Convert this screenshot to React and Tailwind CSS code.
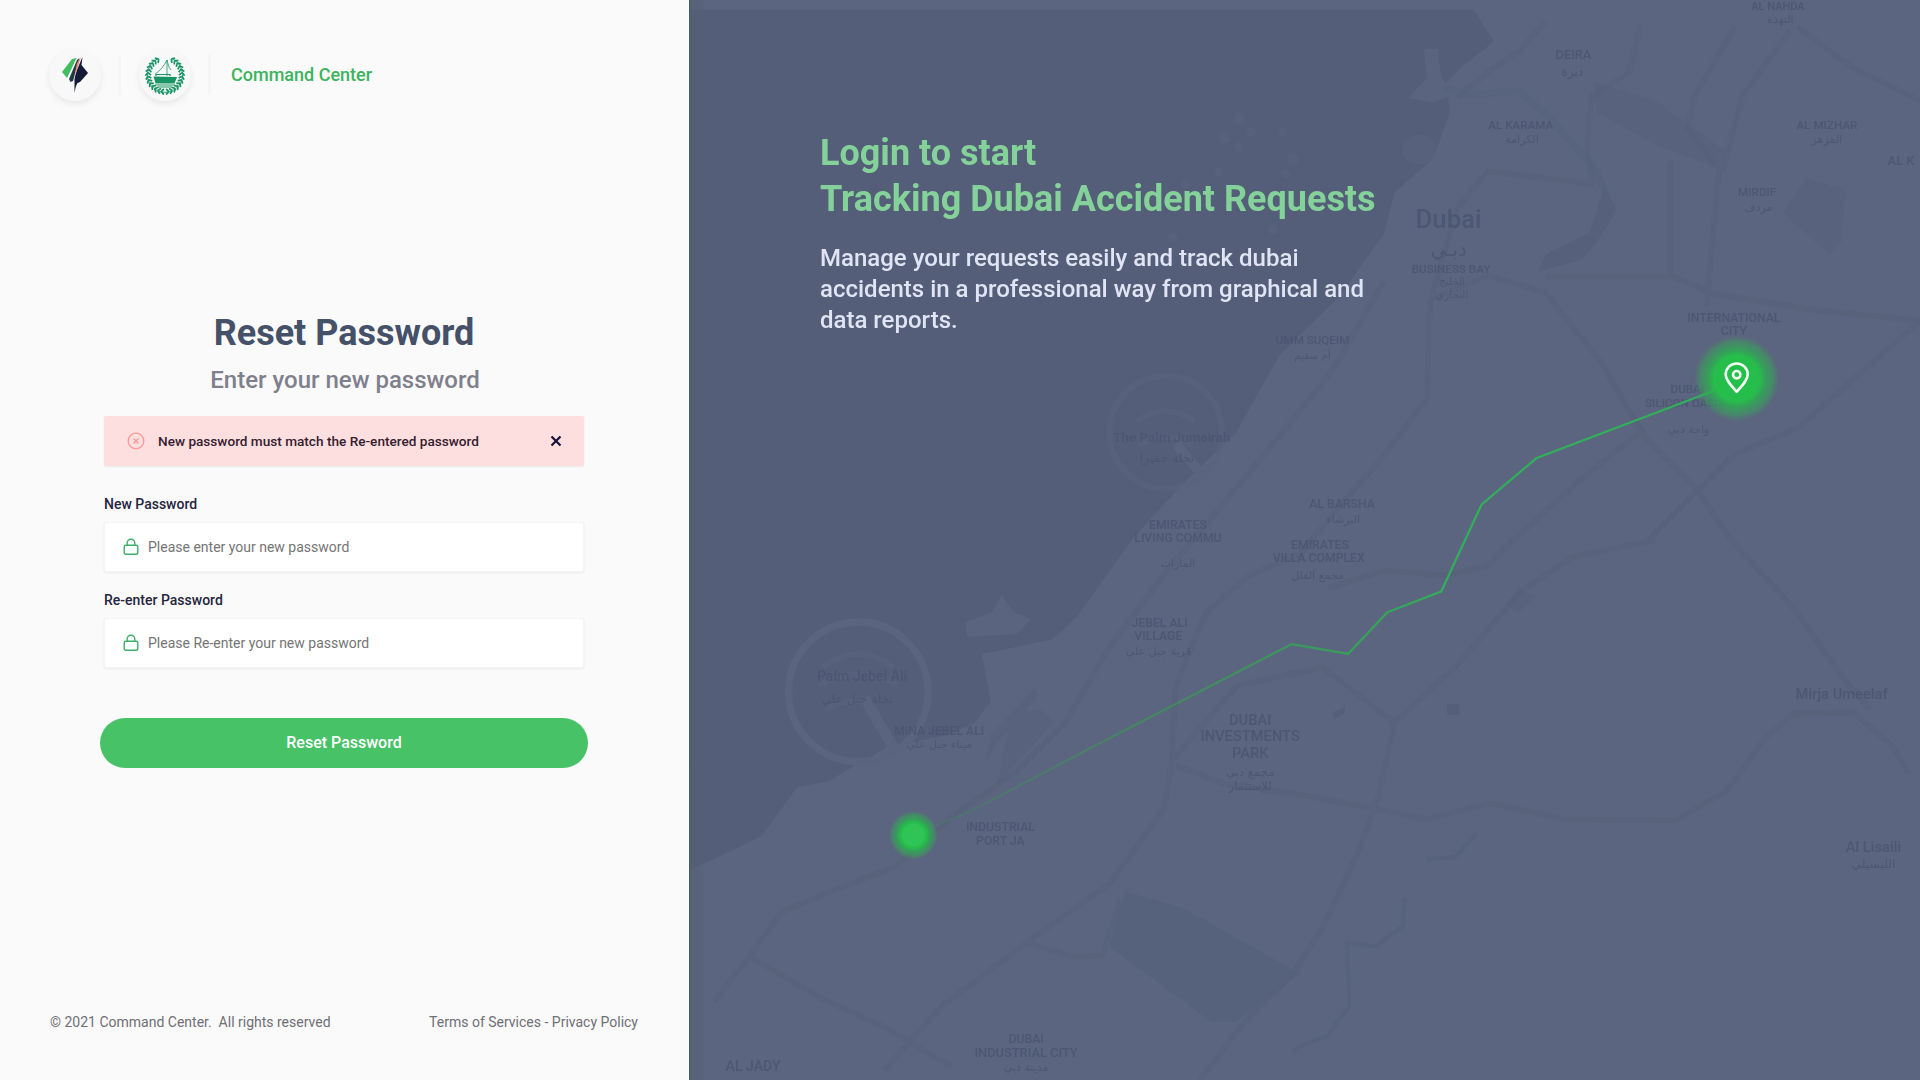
import React from "react";

const ARABIC = "font-['DejaVu_Sans',sans-serif]";

const MAP_LABELS = [
  { x: 1285, y: 48, size: 10.5, text: "DEIRA" },
  { x: 1284, y: 62, size: 10, text: "ديرة", ar: true },
  { x: 1242, y: 105, size: 9.5, text: "AL KARAMA" },
  { x: 1243, y: 117, size: 9, text: "الكرامة", ar: true },
  { x: 1492, y: 105, size: 9.5, text: "AL MIZHAR" },
  { x: 1492, y: 117, size: 9, text: "المزهر", ar: true },
  { x: 1552.5, y: 135, size: 10.5, text: "AL K" },
  { x: 1435, y: 160, size: 9.5, text: "MIRDIF" },
  { x: 1436, y: 172, size: 9, text: "مردف", ar: true },
  { x: 1452, y: 8, size: 9, text: "AL NAHDA" },
  { x: 1454, y: 19, size: 9, text: "النهدة", ar: true },
  { x: 1183, y: 186, size: 21, text: "Dubai" },
  { x: 1183, y: 209, size: 16, text: "دبـي", ar: true },
  { x: 1185, y: 223, size: 9.5, text: "BUSINESS BAY" },
  { x: 1186, y: 233, size: 8.5, text: "الخليج", ar: true },
  { x: 1186, y: 243, size: 8.5, text: "التجاري", ar: true },
  { x: 1072, y: 281, size: 9.5, text: "UMM SUQEIM" },
  { x: 1072, y: 293, size: 8.5, text: "أم سقيم", ar: true },
  { x: 1416, y: 263, size: 10, text: "INTERNATIONAL" },
  { x: 1416, y: 274, size: 10, text: "CITY" },
  { x: 1378, y: 321, size: 9.5, text: "DUBAI" },
  { x: 1376, y: 332, size: 9.5, text: "SILICON OASIS" },
  { x: 1379, y: 354, size: 9, text: "واحة دبي", ar: true },
  { x: 957, y: 361, size: 11, text: "The Palm Jumeirah" },
  { x: 953, y: 377, size: 10, text: "نخلة جميرا", ar: true },
  { x: 1096, y: 415, size: 10, text: "AL BARSHA" },
  { x: 1097, y: 427, size: 9, text: "البرشاء", ar: true },
  { x: 962, y: 432, size: 10, text: "EMIRATES" },
  { x: 962, y: 443, size: 10, text: "LIVING COMMU" },
  { x: 962, y: 463, size: 9, text: "المارات", ar: true },
  { x: 1078, y: 448, size: 10, text: "EMIRATES" },
  { x: 1077, y: 459, size: 10, text: "VILLA COMPLEX" },
  { x: 1076, y: 473, size: 9, text: "مجمع الفلل", ar: true },
  { x: 947, y: 512, size: 10, text: "JEBEL ALI" },
  { x: 946, y: 523, size: 10, text: "VILLAGE" },
  { x: 946, y: 535, size: 9, text: "قرية جبل علي", ar: true },
  { x: 704, y: 556, size: 11.5, text: "Palm Jebel Ali" },
  { x: 700, y: 574, size: 10, text: "نخلة جبل علي", ar: true },
  { x: 767, y: 600, size: 10, text: "MINA JEBEL ALI" },
  { x: 767, y: 611, size: 9, text: "ميناء جبل علي", ar: true },
  { x: 1021, y: 592, size: 12, text: "DUBAI" },
  { x: 1021, y: 605.5, size: 12, text: "INVESTMENTS" },
  { x: 1021, y: 619, size: 12, text: "PARK" },
  { x: 1021, y: 634, size: 9.5, text: "مجمع دبي", ar: true },
  { x: 1021, y: 645, size: 9.5, text: "للإستثمار", ar: true },
  { x: 817, y: 679, size: 10, text: "INDUSTRIAL" },
  { x: 817, y: 690, size: 10, text: "PORT JA" },
  { x: 1504, y: 571, size: 12, text: "Mirja Umeelaf" },
  { x: 1530, y: 696, size: 12, text: "Al Lisaili" },
  { x: 1530, y: 709, size: 10, text: "الليسيلي", ar: true },
  { x: 838, y: 852, size: 10, text: "DUBAI" },
  { x: 838, y: 863.5, size: 10.5, text: "INDUSTRIAL CITY" },
  { x: 838, y: 875, size: 9, text: "مدينة دبي", ar: true },
  { x: 615, y: 875, size: 11.5, text: "AL JADY" },
];

const ROADS = [
  "M1352 441L1284 455L1242 483L1191 542L1139 590L1126 649L1110 694L1081 756L1056 795L1016 835L980 882",
  "M960 625L1000 640L1062 649L1120 660L1165 669L1217 656L1278 669L1368 670L1410 646L1443 601L1465 583L1514 582L1546 610L1559 632",
  "M1168 245L1215 225L1262 239L1307 295L1343 357L1385 399L1414 441L1465 497L1507 556L1527 579",
  "M1568 262L1527 298L1469 349L1417 371L1385 402L1346 441",
  "M1343 350L1288 394L1236 441L1215 462L1180 470L1130 466L1085 480",
  "M1168 245L1165 326L1126 377L1094 413L1062 452L1020 470L985 500L960 560L957 621L951 660L906 722L838 770L770 821L722 874",
  "M1130 230L1090 300L1050 350L1000 410L950 470L905 530L870 590L830 630L780 665L731 708L686 725L638 745L612 781L583 818",
  "M612 781L670 815L725 840L777 871",
  "M1364 132L1364 225L1400 240L1480 253L1568 262",
  "M1404 138L1398 200L1394 250",
  "M1262 226L1370 226",
  "M1417 22L1384 78L1378 104L1400 134",
  "M1462 25L1423 78L1414 112L1407 140",
  "M1468 22L1514 56L1568 82",
  "M1340 20L1330 60L1300 78L1296 120L1300 150L1215 140L1190 170L1170 240",
  "M1262 18L1240 42L1220 55L1190 80",
  "M838 770L880 782L900 780L915 735",
  "M957 621L1010 560L1080 545L1139 590",
];

/* Coast, roads and place names around Dubai, kept low-contrast behind the copy */
function TrackingMap() {
  return (
    <svg viewBox="562.7 0 1005.3 882" preserveAspectRatio="none" className="absolute inset-0 h-full w-full" aria-hidden="true">
      <defs>
        <linearGradient id="route" gradientUnits="userSpaceOnUse" x1="746" y1="682" x2="1180" y2="480">
          <stop offset="0" stopColor="#35a04e" stopOpacity="0.15" />
          <stop offset="0.5" stopColor="#35a04e" stopOpacity="0.6" />
          <stop offset="1" stopColor="#30b058" stopOpacity="1" />
        </linearGradient>
        <radialGradient id="glow">
          <stop offset="0" stopColor="#22c04a" />
          <stop offset="0.54" stopColor="#26bd4b" />
          <stop offset="0.66" stopColor="#2bb04f" stopOpacity="0.8" />
          <stop offset="0.85" stopColor="#35a857" stopOpacity="0.5" />
          <stop offset="1" stopColor="#3f9f5c" stopOpacity="0" />
        </radialGradient>
        <linearGradient id="edge">
          <stop offset="0" stopColor="#4f6068" />
          <stop offset="1" stopColor="#545f73" stopOpacity="0.4" />
        </linearGradient>
      </defs>

      <rect x="562" y="0" width="1007" height="882" fill="#5b657f" />
      <path
        fill="#545e78"
        d="M562 8H1204L1220 34L1192 56L1181 68L1184 92L1170 130L1139 157L1130 191L1094 242L1045 290L1009 354L967 394L925 440L880 503L860 522L802 534L809 573L796 590L775 600L725 610L676 638L651 643L622 683L586 700L562 711Z"
      />
      <g fill="#5a647e">
        <path d="M1163 40L1174 40L1177 62L1186 78L1170 84L1150 80L1165 64Z" />
        <path d="M1145 122a14 12 0 1 0 28 0a14 12 0 1 0-28 0Z" opacity="0.6" />
        <path d="M788 508L810 500L818 486L828 500L842 506L830 518L790 520Z" />
      </g>
      <g fill="none" stroke="#5a647e">
        <circle cx="701" cy="565" r="57" strokeWidth="6" />
        <circle cx="952" cy="353" r="46" strokeWidth="5" opacity="0.6" />
        <path d="M706 570L732 615" strokeWidth="9" />
        <path d="M960 362L985 392" strokeWidth="8" />
        <path d="M672 545q29 -22 58 0M668 560q33 -18 66 0M674 580q20 -14 42 0M928 344q24 -16 48 0M930 364q22 -14 44 0" strokeWidth="5" opacity="0.5" />
      </g>
      <g fill="#57617b">
        <circle cx="1012" cy="97" r="5" /><circle cx="1022" cy="108" r="4" /><circle cx="1000" cy="112" r="5" />
        <circle cx="1012" cy="120" r="4" /><circle cx="1048" cy="108" r="4" /><circle cx="1056" cy="130" r="5" />
        <circle cx="995" cy="140" r="4" /><circle cx="1050" cy="142" r="4" /><circle cx="968" cy="150" r="4" />
        <circle cx="958" cy="194" r="4" /><circle cx="1040" cy="188" r="4" />
      </g>
      <g fill="#555f79">
        <path d="M1301 67L1352 82L1410 124L1404 138L1352 118L1304 92Z" opacity="0.5" />
        <path d="M1475 146L1507 155L1504 197L1494 208L1456 174Z" opacity="0.5" />
        <path d="M919 728L967 742L1061 795L1009 835L990 835L906 773Z" opacity="0.65" />
        <path d="M1310 150L1320 172L1304 198L1292 212L1256 222L1262 208L1298 190L1304 174Z" opacity="0.8" />
        <path d="M809 600L845 562L848 568L815 606L805 622ZM826 582L852 580L860 590L815 640Z" opacity="0.5" />
        <path d="M1182 575h10v9h-10zM1088 582l10-5v5l-8 5z" />
        <path d="M1240 480l14 8l-14 12l-10-6z" opacity="0.5" />
      </g>
      <g fill="none" stroke="#566079" strokeWidth="4.5" strokeLinejoin="round" opacity="0.55">
        {ROADS.map((d) => (
          <path key={d} d={d} />
        ))}
      </g>
      <g fill="none" stroke="#556079" strokeWidth="3" strokeLinejoin="round" opacity="0.7">
        <path d="M1181 72L1200 78L1240 74L1262 93L1288 121L1304 141L1312 160" strokeWidth="5" opacity="0.6" />
        <path d="M1147 733L1146 756L1123 773L1100 770L1102 821L1084 846L1062 854L1056 858" />
        <path d="M1207 680L1188 700L1165 702" />
      </g>
      <g fill="#4b5571" textAnchor="middle" opacity="0.85">
        {MAP_LABELS.map((l) => (
          <text
            key={l.x + l.text}
            x={l.x}
            y={l.y}
            fontSize={l.size}
            className={l.ar ? ARABIC : "font-['Roboto',sans-serif] font-medium"}
          >
            {l.text}
          </text>
        ))}
      </g>
      <rect x="562" y="0" width="13" height="882" fill="url(#edge)" opacity="0.5" />
      <rect x="562" y="0" width="1.6" height="882" fill="#4a5a66" />

      <path
        d="M764 674L790 664L900 606L1055 526L1101 534L1133 500L1177 483L1210 412L1255 374L1400 319"
        fill="none"
        stroke="url(#route)"
        strokeWidth="1.8"
        strokeLinejoin="round"
      />
      <circle cx="746" cy="682" r="20" fill="url(#glow)" />
      <circle cx="746" cy="682" r="9.5" fill="#2fc455" />
      <circle cx="1418.3" cy="309" r="35" fill="url(#glow)" />
      <g fill="none" stroke="#f4fff4" strokeWidth="2.1" strokeLinejoin="round">
        <path d="M1418.3 320C1414 315 1409.300 310.500 1409.300 305.800A9 9 0 0 1 1427.300 305.800C1427.300 310.500 1422.600 315 1418.300 320Z" />
        <circle cx="1418.3" cy="306" r="3" />
      </g>
    </svg>
  );
}

function BoltLogo() {
  return (
    <svg viewBox="0 0 26 36" className="h-9 w-[26px]">
      <path d="M0 15L10 2L14.500 1L7 17L5 21Z" fill="#43bd62" />
      <path d="M7 22L15 3L17.500 1L11 24L8.500 25Z" fill="#233a45" />
      <path d="M15 6L19 0L14.500 14L12.500 18Z" fill="#e9897f" />
      <path d="M20.500 0C18 6 14 14 12.500 22L12.500 36C13.500 31 14 28 15.500 26L18 25L26 16L19.500 8Z" fill="#151a36" />
    </svg>
  );
}

const LEAVES = Array.from({ length: 26 }, (_, i) => -62 + i * (304 / 25));

function ShipEmblem() {
  return (
    <svg viewBox="-20 -20 40 40" className="h-10 w-10" stroke="#199465" fill="none">
      <path d="M-7.500 -16A17.500 17.500 0 1 0 7.500 -16" strokeWidth="0.9" />
      {LEAVES.map((a) => (
        <path
          key={a}
          transform={`rotate(${a})`}
          d={a < 90 ? "M17 -2L19.600 1M17 -2L14 0.400" : "M17 2L19.600 -1M17 2L14 -0.400"}
          strokeWidth="1.7"
        />
      ))}
      <path d="M2 -15V1M2 -15C-1 -9 -5 -4 -10 -1M2 -15C3 -12 3 -8 6 -5" strokeWidth="0.8" />
      <path d="M-9 1V-0.500H5V1" strokeWidth="1.2" />
      <path d="M-11.500 1.500L12 2L9.500 8.500H-9.500Z" fill="#199465" stroke="none" />
      <path d="M-10 10H10M-7 12H7" strokeWidth="1" />
    </svg>
  );
}

function LogoDisc({ children }) {
  return (
    <div className="flex size-[52px] items-center justify-center rounded-full bg-[#f8f8f8] shadow-[0_3px_6px_rgba(0,0,0,0.08)]">
      {children}
    </div>
  );
}

function LockIcon() {
  return (
    <svg viewBox="0 0 16 18" className="h-[18px] w-4 shrink-0" fill="none" stroke="#3fae68" strokeWidth="1.4">
      <rect x="1.200" y="7.200" width="13.600" height="9" rx="1.500" />
      <path d="M4.200 7V5a3.800 3.800 0 0 1 7.600 0v2" />
    </svg>
  );
}

function PasswordField({ label, placeholder, className }) {
  return (
    <label className={className}>
      <span className="block text-sm leading-5 font-medium text-[#25253d]">{label}</span>
      <span className="mt-2 flex h-[50px] items-center gap-[9px] rounded-[2px] border border-[#f5f5f6] bg-white px-[18px] shadow-[0_1px_3px_rgba(0,0,0,0.07)]">
        <LockIcon />
        <input
          type="password"
          placeholder={placeholder}
          className="w-full bg-transparent text-sm outline-none placeholder:text-[#757575]"
        />
      </span>
    </label>
  );
}

export default function App() {
  return (
    <div className="flex h-[1080px] w-[1920px] overflow-hidden bg-[#fafafb] font-['Roboto',sans-serif]">
      <section className="flex w-[689px] shrink-0 flex-col">
        <header className="mt-[37px] flex h-[75px] items-center pl-[49px]">
          <LogoDisc>
            <BoltLogo />
          </LogoDisc>
          <span className="ml-[17px] h-10 w-[3px] bg-[#f5f5f5]" />
          <span className="ml-[18px]">
            <LogoDisc>
              <ShipEmblem />
            </LogoDisc>
          </span>
          <span className="ml-[17px] h-10 w-[3px] bg-[#f5f5f5]" />
          <span className="ml-5 text-lg font-medium text-[#3bb45c]">Command Center</span>
        </header>

        <main className="mt-[199px] ml-[104px] flex w-[480px] flex-col">
          <h1 className="text-center text-4xl leading-[44px] font-bold text-[#455069]">Reset Password</h1>
          <p className="mt-[7px] pl-0.5 text-center text-2xl leading-9 font-medium text-[#7f808c]">Enter your new password</p>

          <div className="mt-[18px] flex h-[50px] items-center rounded-[2px] bg-[#fddfe0] pr-[21px] pl-[23px] shadow-[0_1px_2px_rgba(0,0,0,0.07)]">
            <svg viewBox="0 0 18 18" className="size-[18px]" fill="none" stroke="#f79a93" strokeWidth="1.3">
              <circle cx="9" cy="9" r="7.800" />
              <path d="M6.500 6.500L11.500 11.500M11.500 6.500L6.500 11.500" />
            </svg>
            <p className="ml-[13px] text-[13.6px] font-medium text-[#35202f]">New password must match the Re-entered password</p>
            <svg viewBox="0 0 14 14" className="ml-auto size-3.5" stroke="#171238" strokeWidth="2.2">
              <path d="M2.500 2.500L11.500 11.500M11.500 2.500L2.500 11.500" />
            </svg>
          </div>

          <PasswordField className="mt-7" label="New Password" placeholder="Please enter your new password" />
          <PasswordField className="mt-[18px]" label="Re-enter Password" placeholder="Please Re-enter your new password" />

          <button className="-mx-1 mt-[50px] h-[50px] rounded-full bg-[#47c267] text-base font-medium text-white">
            Reset Password
          </button>
        </main>

        <footer className="mt-auto mb-12 flex justify-between pr-[51px] pl-[50px] text-sm leading-5 text-[#6f6f74]">
          <p>©&nbsp;2021 Command Center.&nbsp; All rights reserved</p>
          <p>Terms of Services - Privacy Policy</p>
        </footer>
      </section>

      <section className="relative flex-1 bg-[#5b657f]">
        <TrackingMap />
        <div className="relative ml-[131px] pt-[130px]">
          <h2 className="text-4xl leading-[46px] font-bold text-[#84d299]">
            Login to start
            <br />
            Tracking Dubai Accident Requests
          </h2>
          <p className="mt-[21px] w-[560px] text-2xl leading-[31px] font-medium text-[#dfe5f5]">
            Manage your requests easily and track dubai accidents in a professional way from graphical and data reports.
          </p>
        </div>
      </section>
    </div>
  );
}
